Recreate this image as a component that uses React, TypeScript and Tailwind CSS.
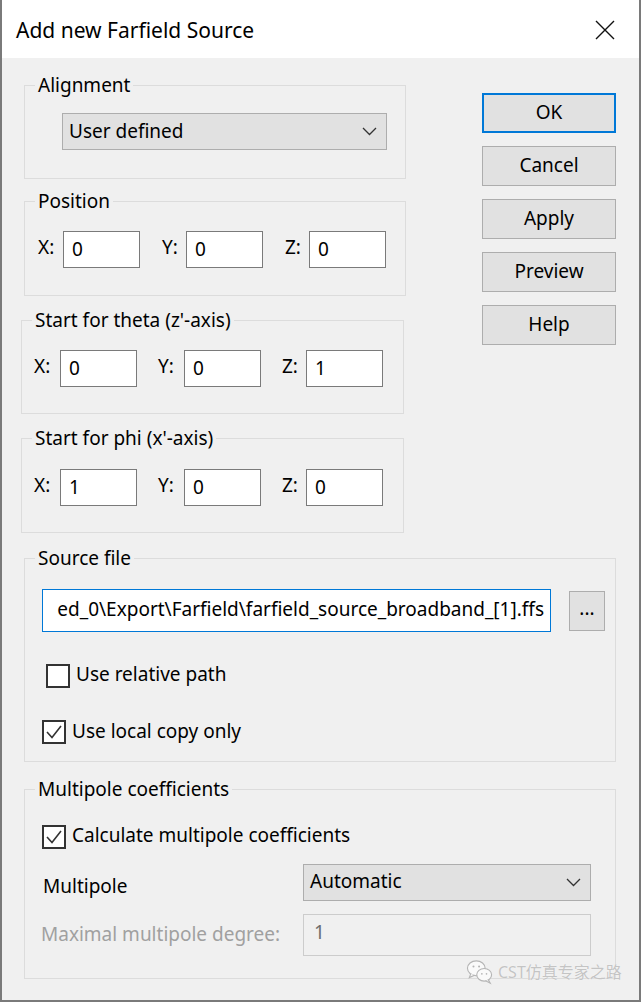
import type { ReactNode } from 'react'

function Group({ label, className, children }: { label: string; className: string; children: ReactNode }) {
  return (
    <fieldset className={`border border-[#dcdcdc] px-[10px] ${className}`}>
      <legend className="px-[3px] leading-[26px]">{label}</legend>
      {children}
    </fieldset>
  )
}

function Chevron() {
  return (
    <svg width="15" height="9" viewBox="0 0 15 9" className="shrink-0">
      <polyline points="1,1 7.5,7.5 14,1" fill="none" stroke="#333" strokeWidth="1.3" />
    </svg>
  )
}

function Check({ checked }: { checked: boolean }) {
  return (
    <div className="w-[24px] h-[24px] bg-white border-2 border-[#333] shrink-0">
      {checked && (
        <svg width="20" height="20" viewBox="0 0 20 20">
          <polyline points="3,10 8,15.5 17,4" fill="none" stroke="#333" strokeWidth="1.6" />
        </svg>
      )}
    </div>
  )
}

function Coord({ label, value, labelW }: { label: string; value: string; labelW: string }) {
  return (
    <div className="flex items-center">
      <span className={`${labelW} -mt-[4px]`}>{label}</span>
      <div className="w-[77px] h-[37px] bg-white border border-[#7a7a7a] pl-[8px] flex items-center">{value}</div>
    </div>
  )
}

const BUTTONS = ['Cancel', 'Apply', 'Preview', 'Help']

export default function App() {
  return (
    <div className="w-[641px] h-[1002px] bg-[#f0f0f0] border-x-2 border-b-2 border-[#7a7a7a] text-[19px] text-black font-['Noto_Sans',sans-serif] relative overflow-hidden">
      {/* title bar */}
      <div className="h-[58px] bg-white flex items-center pl-[14px] pr-[24px]">
        <span className="text-[21px] mt-[4px]">Add new Farfield Source</span>
        <svg width="20" height="20" viewBox="0 0 20 20" className="ml-auto mt-[2px]">
          <path d="M1 1 L19 19 M19 1 L1 19" stroke="#111" strokeWidth="1.4" />
        </svg>
      </div>

      <div className="pt-[14px]">
        <div className="flex">
          {/* left column */}
          <div className="flex flex-col">
            <Group label="Alignment" className="ml-[22px] w-[382px] pb-[28px]">
              <div className="mt-[15px] ml-[27px] w-[325px] h-[37px] bg-[#e1e1e1] border border-[#adadad] flex items-center pl-[6px] pr-[9px]">
                <span className="flex-1">User defined</span>
                <Chevron />
              </div>
            </Group>

            <Group label="Position" className="ml-[22px] w-[382px] mt-[9px] pb-[27px]">
              <div className="mt-[17px] pl-[3px] flex gap-[22px]">
                <Coord label="X:" value="0" labelW="w-[25px]" />
                <Coord label="Y:" value="0" labelW="w-[24px]" />
                <Coord label="Z:" value="0" labelW="w-[24px]" />
              </div>
            </Group>

            <Group label="Start for theta (z'-axis)" className="ml-[19px] w-[383px] mt-[11px] pb-[26px]">
              <div className="mt-[17px] pl-[2px] flex gap-[21px]">
                <Coord label="X:" value="0" labelW="w-[26px]" />
                <Coord label="Y:" value="0" labelW="w-[26px]" />
                <Coord label="Z:" value="1" labelW="w-[24px]" />
              </div>
            </Group>

            <Group label="Start for phi (x'-axis)" className="ml-[19px] w-[383px] mt-[11px] pb-[26px]">
              <div className="mt-[18px] pl-[2px] flex gap-[21px]">
                <Coord label="X:" value="1" labelW="w-[26px]" />
                <Coord label="Y:" value="0" labelW="w-[26px]" />
                <Coord label="Z:" value="0" labelW="w-[24px]" />
              </div>
            </Group>
          </div>

          {/* buttons */}
          <div className="ml-auto mr-[23px] mt-[21px] flex flex-col gap-[13px]">
            <button className="w-[134px] h-[40px] bg-[#e1e1e1] border-2 border-[#0078d7] flex items-center justify-center">
              <span className="-mt-[2px]">OK</span>
            </button>
            {BUTTONS.map((b) => (
              <button key={b} className="w-[134px] h-[40px] bg-[#e1e1e1] border border-[#adadad] flex items-center justify-center">
                <span className="-mt-[2px]">{b}</span>
              </button>
            ))}
          </div>
        </div>

        <Group label="Source file" className="ml-[22px] w-[592px] mt-[12px] pb-[16px]">
          <div className="mt-[18px] ml-[7px] flex items-center gap-[18px]">
            <div className="w-[509px] h-[43px] bg-white border border-[#0078d7] px-[6px] flex items-center">
              <div className="overflow-hidden flex justify-end w-full whitespace-nowrap">
                <span className="-mt-[2px]">ed_0\Export\Farfield\farfield_source_broadband_[1].ffs</span>
              </div>
            </div>
            <button className="w-[36px] h-[40px] bg-[#e1e1e1] border border-[#adadad] flex items-center justify-center">
              <span className="-mt-[4px]">...</span>
            </button>
          </div>
          <div className="mt-[31px] ml-[11px] flex items-center gap-[6px]">
            <Check checked={false} />
            <span className="-mt-[3px]">Use relative path</span>
          </div>
          <div className="mt-[31px] ml-[7px] flex items-center gap-[6px]">
            <Check checked={true} />
            <span className="-mt-[3px]">Use local copy only</span>
          </div>
        </Group>

        <Group label="Multipole coefficients" className="ml-[22px] w-[592px] mt-[14px] pb-[22px]">
          <div className="mt-[22px] ml-[7px] flex items-center gap-[6px]">
            <Check checked={true} />
            <span className="-mt-[3px]">Calculate multipole coefficients</span>
          </div>
          <div className="mt-[14px] flex items-center">
            <span className="w-[268px] pl-[8px] mt-[8px]">Multipole</span>
            <div className="w-[288px] h-[37px] bg-[#e1e1e1] border border-[#adadad] flex items-center pl-[6px] pr-[9px]">
              <span className="flex-1 -mt-[2px]">Automatic</span>
              <Chevron />
            </div>
          </div>
          <div className="mt-[13px] flex items-center">
            <span className="w-[268px] pl-[6px] text-[#a0a0a0]">Maximal multipole degree:</span>
            <div className="w-[288px] h-[42px] border border-[#cccccc] pl-[10px] flex items-center text-[#6d6d6d]">
              <span className="-mt-[4px]">1</span>
            </div>
          </div>
        </Group>
      </div>

      {/* watermark */}
      <div className="absolute left-[464px] top-[959px] flex items-center gap-[4px]">
        <svg width="28" height="26" viewBox="0 0 30 28">
          <ellipse cx="11" cy="10" rx="9.5" ry="8" fill="#fafafa" stroke="#b5b5b5" strokeWidth="1.2" />
          <path d="M5 16 L3.5 20 L9 17.5" fill="#fafafa" stroke="#b5b5b5" strokeWidth="1.2" />
          <ellipse cx="19.5" cy="17" rx="8" ry="6.8" fill="#fafafa" stroke="#b5b5b5" strokeWidth="1.2" />
          <path d="M24 22.5 L26 26 L21 23.5" fill="#fafafa" stroke="#b5b5b5" strokeWidth="1.2" />
          <circle cx="8" cy="8" r="1.1" fill="#b5b5b5" />
          <circle cx="14" cy="8" r="1.1" fill="#b5b5b5" />
          <circle cx="17" cy="16" r="0.9" fill="#b5b5b5" />
          <circle cx="22" cy="16" r="0.9" fill="#b5b5b5" />
        </svg>
        <span className="text-[16px] text-[#c4c4c4] font-['Noto_Sans','Noto_Sans_CJK_SC',sans-serif] [text-shadow:0_0_1px_#ffffff]">CST仿真专家之路</span>
      </div>
    </div>
  )
}
